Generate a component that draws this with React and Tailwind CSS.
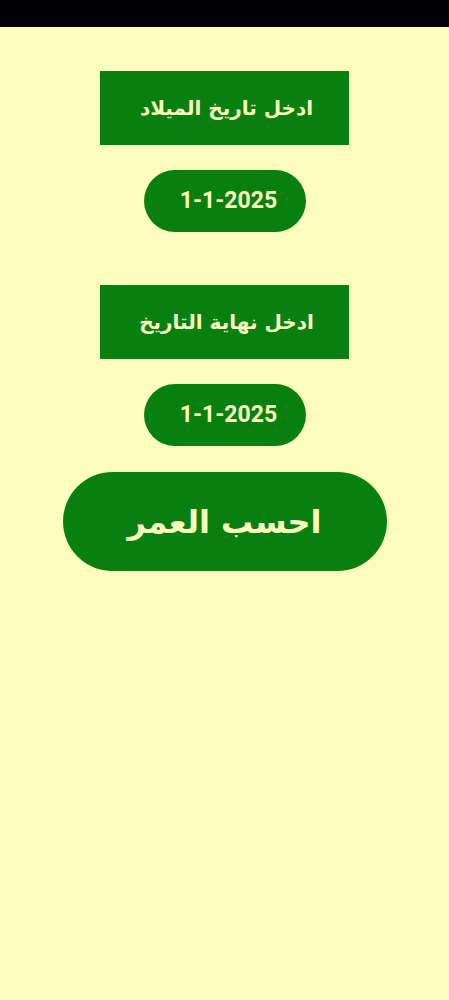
import React from "react";

const arabic = { fontFamily: '"DejaVu Sans", "Noto Sans", sans-serif' };

function Label({ text }) {
  return (
    <div
      dir="rtl"
      className="w-[249px] h-[74px] bg-[#078010] text-[#fdfdc0] flex items-center justify-center pl-1 text-[20px] font-bold"
      style={arabic}
    >
      {text}
    </div>
  );
}

function DatePill() {
  return (
    <button className="w-[162px] h-[62px] rounded-full bg-[#078010] text-[#fdfdc0] text-[23px] font-bold font-['Roboto',sans-serif] flex items-center justify-center pl-2">
      1-1-2025
    </button>
  );
}

export default function App() {
  return (
    <div className="w-[449px] min-h-[1000px] bg-[#fdfdc0] flex flex-col">
      {/* status bar */}
      <div className="h-[27px] bg-[#020105]" />

      <div className="flex flex-col items-center pt-[44px]">
        <Label text="ادخل تاريخ الميلاد" />
        <div className="mt-[25px]">
          <DatePill />
        </div>

        <div className="mt-[53px]">
          <Label text="ادخل نهاية التاريخ" />
        </div>
        <div className="mt-[25px]">
          <DatePill />
        </div>

        <button
          dir="rtl"
          className="mt-[26px] w-[324px] h-[99px] rounded-full bg-[#078010] text-[#fdfdc0] text-[32px] font-bold flex items-center justify-center"
          style={arabic}
        >
          احسب العمر
        </button>
      </div>
    </div>
  );
}
